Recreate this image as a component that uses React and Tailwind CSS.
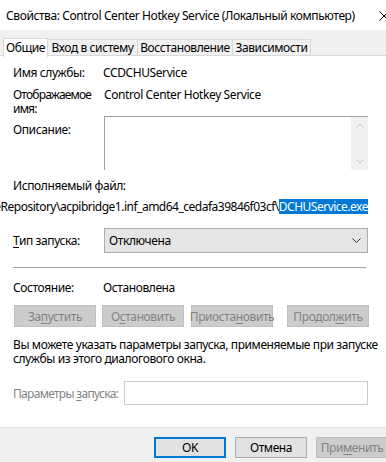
export default function App() {
  const font = { fontFamily: '"Segoe UI", "Noto Sans", "Liberation Sans", sans-serif' }

  return (
    <div className="w-[386px] h-[462px] overflow-hidden bg-white flex flex-col text-[12px] tracking-[-0.4px] text-black relative" style={font}>
      {/* title bar */}
      <div className="h-[30px] shrink-0 bg-white flex items-center pl-[6px] relative">
        <span className="leading-[15px] whitespace-nowrap">Свойства: Control Center Hotkey Service (Локальный компьютер)</span>
        <svg className="absolute left-[379px] top-[11px]" width="10" height="10" viewBox="0 0 10 10">
          <path d="M0.5 0.5 L9.5 9.5 M9.5 0.5 L0.5 9.5" stroke="#000" strokeWidth="1" />
        </svg>
      </div>

      {/* tabs */}
      <div className="h-[26px] shrink-0 bg-[#f0f0f0] flex items-end pl-[3px] relative whitespace-nowrap">
        <div className="absolute left-0 right-0 bottom-0 h-px bg-[#d9d9d9]" />
        <div className="relative z-10 shrink-0 h-[19px] w-[45px] bg-white border border-b-0 border-[#d9d9d9] flex items-center justify-center -mb-px pb-[2px]">
          <span className="leading-[15px]">Общие</span>
        </div>
        <div className="shrink-0 h-[16px] w-[90px] bg-[#f0f0f0] border border-b-0 border-l-0 border-[#d9d9d9] flex items-center justify-center mb-px">
          <span className="leading-[15px]">Вход в систему</span>
        </div>
        <div className="shrink-0 h-[16px] w-[95px] bg-[#f0f0f0] border border-b-0 border-l-0 border-[#d9d9d9] flex items-center justify-center mb-px">
          <span className="leading-[15px]">Восстановление</span>
        </div>
        <div className="shrink-0 h-[16px] w-[78px] bg-[#f0f0f0] border border-b-0 border-l-0 border-[#d9d9d9] flex items-center justify-center mb-px">
          <span className="leading-[15px]">Зависимости</span>
        </div>
      </div>

      {/* panel */}
      <div className="flex-1 bg-white flex flex-col pl-[13px] leading-[15px]">
        <div className="flex mt-[9px] whitespace-nowrap">
          <div className="w-[90px] shrink-0">Имя службы:</div>
          <div>CCDCHUService</div>
        </div>

        <div className="flex mt-[8px] whitespace-nowrap">
          <div className="w-[91px] shrink-0 leading-[14px] tracking-[-0.8px]">Отображаемое<br />имя:</div>
          <div className="leading-[14px]">Control Center Hotkey Service</div>
        </div>

        <div className="flex mt-[0px]">
          <div className="w-[91px] shrink-0 pt-[6px]">Описание:</div>
          <div className="w-[264px] shrink-0 h-[54px] border-t border-l border-[#a0a0a0] flex justify-end">
            <div className="w-[17px] h-full bg-[#f0f0f0] flex flex-col items-center justify-between py-[6px]">
              <svg width="8" height="5" viewBox="0 0 8 5">
                <path d="M0.5 4.5 L4 1 L7.5 4.5" fill="none" stroke="#c2c2c2" strokeWidth="1" />
              </svg>
              <svg width="8" height="5" viewBox="0 0 8 5">
                <path d="M0.5 0.5 L4 4 L7.5 0.5" fill="none" stroke="#c2c2c2" strokeWidth="1" />
              </svg>
            </div>
          </div>
        </div>

        <div className="mt-[8px]">Исполняемый файл:</div>

        <div className="mt-[6px] -ml-[13px] w-[368px] overflow-hidden flex justify-end whitespace-nowrap tracking-[-0.5px]">
          <span className="shrink-0">C:\Windows\System32\DriverStore\FileRepository\acpibridge1.inf_amd64_cedafa39846f03cf\</span>
          <span className="shrink-0 bg-[#0078d7] text-white">DCHUService.exe</span>
        </div>

        <div className="flex items-center mt-[14px] whitespace-nowrap">
          <div className="w-[91px] shrink-0"><span className="underline underline-offset-2">Т</span>ип запуска:</div>
          <div className="w-[264px] shrink-0 h-[25px] bg-[#e5e5e5] border border-[#adadad] flex items-center justify-between pl-[4px] pr-[6px]">
            <span>Отключена</span>
            <svg width="9" height="5" viewBox="0 0 9 5">
              <path d="M0.5 0.5 L4.5 4.5 L8.5 0.5" fill="none" stroke="#333" strokeWidth="1" />
            </svg>
          </div>
        </div>

        <div className="mt-[14px] w-[353px] h-px bg-[#a0a0a0]" />

        <div className="flex mt-[12px] whitespace-nowrap">
          <div className="w-[90px] shrink-0">Состояние:</div>
          <div>Остановлена</div>
        </div>

        <div className="flex mt-[10px] ml-px whitespace-nowrap">
          <div className="shrink-0 w-[82px] h-[22px] bg-[#cccccc] border border-[#bfbfbf] text-[#838383] flex items-center justify-center">
            <span>За<span className="underline underline-offset-2">п</span>устить</span>
          </div>
          <div className="shrink-0 w-[82px] h-[22px] ml-[6px] bg-[#cccccc] border border-[#bfbfbf] text-[#838383] flex items-center justify-center">
            <span>О<span className="underline underline-offset-2">с</span>тановить</span>
          </div>
          <div className="shrink-0 w-[82px] h-[22px] ml-[7px] bg-[#cccccc] border border-[#bfbfbf] text-[#838383] flex items-center justify-center">
            <span>Приоста<span className="underline underline-offset-2">н</span>овить</span>
          </div>
          <div className="shrink-0 w-[82px] h-[22px] ml-[14px] bg-[#cccccc] border border-[#bfbfbf] text-[#838383] flex items-center justify-center">
            <span>Продол<span className="underline underline-offset-2">ж</span>ить</span>
          </div>
        </div>

        <div className="mt-[11px] leading-[14px] w-[370px]">
          Вы можете указать параметры запуска, применяемые при запуске службы из этого диалогового окна.
        </div>

        <div className="flex items-center mt-[15px] whitespace-nowrap">
          <div className="w-[111px] shrink-0 text-[#838383] tracking-[-0.7px]">Параметры <span className="underline underline-offset-2">з</span>апуска:</div>
          <div className="w-[244px] shrink-0 h-[24px] border border-[#cccccc] bg-white" />
        </div>
      </div>

      {/* footer */}
      <div className="h-[35px] shrink-0 bg-[#f0f0f0] border-t border-[#dfdfdf] flex items-start pt-[9px] pl-[154px] gap-[9px] whitespace-nowrap">
        <div className="shrink-0 w-[72px] h-[21px] bg-[#e1e1e1] border-2 border-[#0078d7] flex items-center justify-center">OK</div>
        <div className="shrink-0 w-[72px] h-[21px] bg-[#e1e1e1] border border-[#adadad] flex items-center justify-center">Отмена</div>
        <div className="shrink-0 w-[72px] h-[21px] bg-[#cccccc] border border-[#bfbfbf] text-[#838383] flex items-center justify-center">
          <span>При<span className="underline underline-offset-2">м</span>енить</span>
        </div>
      </div>
    </div>
  )
}
